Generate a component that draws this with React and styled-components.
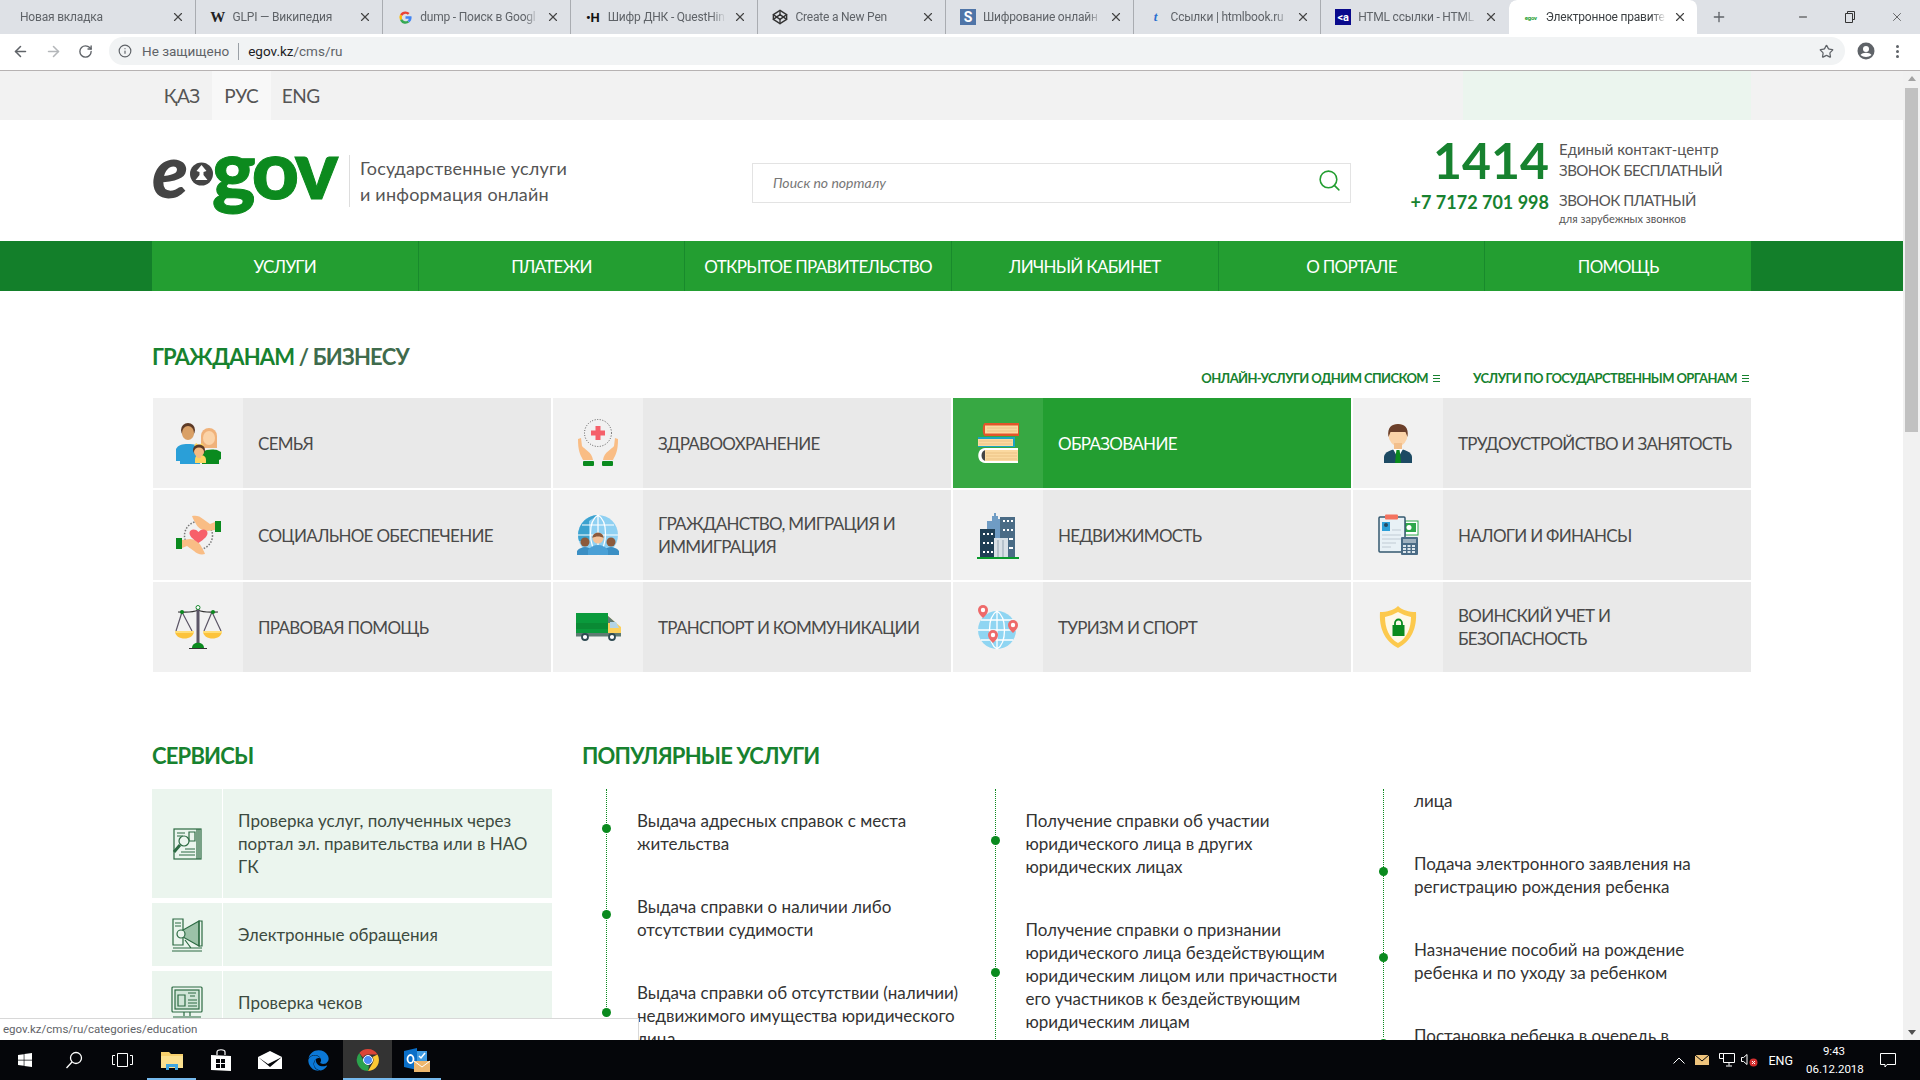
import React from "react";
import styled, { createGlobalStyle } from "styled-components";
import { ArrowLeft, ArrowRight, RotateCw, Info, Star, X, Plus, Minus, Search, Codepen } from "lucide-react";
import { FaWindows, FaEdge } from "react-icons/fa";

const SANS = `"Lato", "Roboto", "Liberation Sans", sans-serif`;
const UI = `"Roboto", "Liberation Sans", sans-serif`;
const GREEN = "#17822f";

const GlobalStyle = createGlobalStyle`
  html, body { margin: 0; padding: 0; background: #fff; overflow: hidden; }
  * { box-sizing: border-box; }
`;

const Screen = styled.div`
  width: 1920px;
  height: 1080px;
  display: flex;
  flex-direction: column;
  overflow: hidden;
  font-family: ${SANS};
`;

/* browser chrome */
const TabStrip = styled.div`
  height: 34px;
  background: #dee1e6;
  display: flex;
  padding-left: 8px;
  position: relative;
  font-family: ${UI};
`;
const Tab = styled.div`
  width: ${(p) => (p.$active ? "189px" : "187.6px")};
  height: 34px;
  display: flex;
  align-items: center;
  gap: 7px;
  padding: 0 10px 0 ${(p) => (p.$plain ? "12px" : "14px")};
  background: ${(p) => (p.$active ? "#fff" : "transparent")};
  border-radius: ${(p) => (p.$active ? "8px 8px 0 0" : "0")};
  border-right: 1px solid ${(p) => (p.$noSep ? "transparent" : "#a9acb1")};
  background-clip: padding-box;
  color: ${(p) => (p.$active ? "#3c4043" : "#5f6368")};
  font-size: 12px;
  letter-spacing: -0.2px;
  svg.close { color: #444; flex: none; }
`;
const TabTitle = styled.span`
  flex: 1;
  white-space: nowrap;
  overflow: hidden;
  -webkit-mask-image: linear-gradient(90deg, #000 88%, transparent);
  mask-image: linear-gradient(90deg, #000 88%, transparent);
`;
const Favicon = styled.span`
  width: 16px;
  height: 16px;
  flex: none;
  display: flex;
  align-items: center;
  justify-content: center;
  font-size: ${(p) => p.$size || 12}px;
  font-weight: 700;
  font-family: ${(p) => (p.$serif ? `"Liberation Serif", serif` : UI)};
  color: ${(p) => p.$color || "#222"};
  background: ${(p) => p.$bg || "transparent"};
`;
const NewTab = styled.div`
  width: 30px;
  display: flex;
  align-items: center;
  justify-content: center;
  color: #5f6368;
  margin-left: 6px;
`;
const WindowControls = styled.div`
  margin-left: auto;
  display: flex;
  align-items: center;
  color: #333;
`;
const WindowButton = styled.div`
  width: 47px;
  height: 30px;
  display: flex;
  align-items: center;
  justify-content: center;
`;
const Toolbar = styled.div`
  height: 37px;
  background: #fff;
  border-bottom: 1px solid #b7b3b3;
  display: flex;
  align-items: center;
  padding: 0 10px 2px 12px;
  color: #5f6368;
`;
const NavIcons = styled.div`
  display: flex;
  align-items: center;
  gap: 16px;
  width: 97px;
`;
const Omnibox = styled.div`
  width: 1736px;
  height: 28px;
  border-radius: 14px;
  background: #f1f3f4;
  display: flex;
  align-items: center;
  padding: 0 11px 0 9px;
  font: 13.5px ${UI};
  color: #5f6368;
`;
const Secure = styled.span`
  margin-left: 10px;
  padding-right: 9px;
  margin-right: 9px;
  border-right: 1px solid #9aa0a6;
  line-height: 17px;
`;
const Host = styled.span`color: #202124;`;
const OmniStar = styled(Star)`
  margin-left: auto;
`;
const ToolbarEnd = styled.div`
  margin-left: 12px;
  display: flex;
  align-items: center;
  gap: 21px;
`;
const Kebab = styled.span`
  display: flex;
  flex-direction: column;
  gap: 2px;
  i { width: 3px; height: 3px; border-radius: 50%; background: #5f6368; }
`;

/* page viewport */
const Viewport = styled.div`
  position: relative;
  height: 969px;
  display: flex;
  overflow: hidden;
  background: #fff;
`;
const Page = styled.div`
  width: 1903px;
  flex: none;
`;
const Scrollbar = styled.div`
  width: 17px;
  background: #f1f1f1;
  padding: 17px 2px 0;
  position: relative;
  i { display: block; height: 344px; background: #c1c1c1; }
  &::before, &::after {
    content: "";
    position: absolute;
    left: 5px;
    border-left: 4px solid transparent;
    border-right: 4px solid transparent;
  }
  &::before { top: 5px; border-bottom: 5px solid #a3a3a3; }
  &::after { bottom: 5px; border-top: 5px solid #505050; }
`;
const Container = styled.div`
  width: 1599px;
  margin: 0 auto;
`;
const StatusBubble = styled.div`
  position: absolute;
  left: 0;
  bottom: 0;
  width: 639px;
  height: 22px;
  background: #fff;
  border-top: 1px solid #d8d8d8;
  border-right: 1px solid #d8d8d8;
  padding-left: 3px;
  font: 11.5px/21px ${UI};
  color: #5f6368;
`;

/* lang bar */
const LangBar = styled.div`
  height: 49px;
  background: #f2f2f2;
`;
const LangRow = styled(Container)`
  height: 49px;
  display: flex;
`;
const LangItem = styled.a`
  width: 59.5px;
  display: flex;
  align-items: center;
  justify-content: center;
  font-size: 19px;
  letter-spacing: -0.5px;
  color: #555;
  background: ${(p) => (p.$active ? "#f8f8f8" : "transparent")};
`;
const LangPromo = styled.div`
  width: 288px;
  margin-left: auto;
  background: #ebf5ee;
`;

/* header */
const Header = styled(Container)`
  height: 121px;
  display: flex;
  align-items: center;
`;
const Logo = styled.div`
  width: 197px;
  height: 66px;
  margin-top: -20px;
  display: flex;
  align-items: flex-start;
  line-height: 1;
`;
const LogoE = styled.span`
  font: italic 900 74px/58px ${SANS};
  color: #444;
  width: 36px;
  margin-top: 3px;
`;
const LogoMark = styled.svg`
  margin: 24px 0 0 1px;
  flex: none;
`;
const LogoGov = styled.span`
  font: 900 82px/58px ${SANS};
  color: #0c8a1e;
  letter-spacing: -3px;
  margin-left: -2px;
  -webkit-text-stroke: 1px #0c8a1e;
`;
const Tagline = styled.div`
  width: 403px;
  height: 52px;
  border-left: 1px solid #ddd;
  padding-left: 10px;
  font-size: 18px;
  letter-spacing: 0.2px;
  line-height: 26px;
  color: #555;
`;
const SearchBox = styled.div`
  width: 599px;
  height: 40px;
  margin-top: 4px;
  border: 1px solid #e3e3e3;
  display: flex;
  align-items: center;
  justify-content: space-between;
  padding: 0 8px 0 20px;
  font-style: italic;
  font-size: 14px;
  color: #777;
  svg { color: #239e31; margin-bottom: 4px; }
`;
const Contacts = styled.div`
  flex: 1;
  margin-top: 3px;
  display: grid;
  grid-template-columns: 198px auto;
  column-gap: 10px;
  row-gap: 9px;
  align-items: center;
  color: #555;
`;
const BigPhone = styled.div`
  text-align: right;
  font: 700 50px/42px ${SANS};
  color: ${GREEN};
`;
const SmallPhone = styled.div`
  align-self: start;
  padding-top: 2px;
  text-align: right;
  font: 700 18px/20px ${SANS};
  color: ${GREEN};
`;
const PhoneNote = styled.div`
  font-size: 15px;
  line-height: 21px;
  white-space: nowrap;
  small { display: block; font-size: 11px; line-height: 15px; }
`;
const Caps = styled.span`
  letter-spacing: -0.5px;
`;

/* nav */
const NavBar = styled.nav`
  height: 50px;
  background: #137f2a;
`;
const NavRow = styled(Container)`
  height: 50px;
  display: flex;
`;
const NavItem = styled.a`
  flex: 1;
  background: #239e31;
  border-left: ${(p) => (p.$first ? "none" : "1px solid #188a2c")};
  display: flex;
  align-items: center;
  justify-content: center;
  font-size: 17px;
  letter-spacing: -0.7px;
  color: #fff;
`;

/* categories */
const Heading = styled.h2`
  margin: 0;
  font: 700 22px/28px ${SANS};
  letter-spacing: -0.8px;
  color: ${GREEN};
  span { color: #3f6b4c; }
`;
const TopHeading = styled(Heading)`
  margin-top: 52px;
`;
const LinkRow = styled.div`
  display: flex;
  justify-content: flex-end;
  gap: 33px;
  padding-right: 2px;
  height: 18px;
  margin: -2px 0 11px;
`;
const ListLink = styled.a`
  display: flex;
  align-items: center;
  gap: 5px;
  font: 700 13px/18px ${SANS};
  letter-spacing: -0.6px;
  color: ${GREEN};
`;
const ListGlyph = styled.i`
  width: 7px;
  height: 7px;
  border-top: 1px solid ${GREEN};
  border-bottom: 1px solid ${GREEN};
  position: relative;
  &::after {
    content: "";
    position: absolute;
    left: 0;
    right: 0;
    top: 2px;
    border-top: 1px solid ${GREEN};
  }
`;
const CategoryGrid = styled.div`
  display: grid;
  grid-template-columns: repeat(4, 398px);
  grid-auto-rows: 90px;
  gap: 2px;
  padding-left: 1px;
`;
const Category = styled.a`
  display: flex;
  background: ${(p) => (p.$active ? "#239e31" : "#e9e9e9")};
  color: ${(p) => (p.$active ? "#fff" : "#4a4a4a")};
`;
const CategoryIcon = styled.div`
  width: 90px;
  flex: none;
  display: flex;
  align-items: center;
  justify-content: center;
  background: ${(p) => (p.$active ? "#37a843" : "#f1f1f1")};
`;
const CategoryName = styled.div`
  flex: 1;
  align-self: center;
  padding: 0 13px 0 15px;
  font-size: 17px;
  letter-spacing: -0.7px;
  line-height: 23px;
`;

/* lower part */
const Lower = styled.div`
  display: flex;
  margin-top: 70px;
`;
const ServicesCol = styled.div`
  width: 430px;
  flex: none;
`;
const PopularCol = styled.div`
  flex: 1;
`;
const LowerHeading = styled(Heading)`
  margin-bottom: 19px;
`;
const ServiceList = styled.div`
  width: 400px;
  display: flex;
  flex-direction: column;
  gap: 5px;
`;
const Service = styled.a`
  display: flex;
  min-height: 63px;
  background: #ebf5ee;
  color: #3c4a40;
`;
const ServiceIcon = styled.div`
  width: 71px;
  flex: none;
  border-right: 1px solid #fff;
  display: flex;
  align-items: center;
  justify-content: center;
`;
const ServiceText = styled.div`
  align-self: center;
  padding: ${(p) => (p.$tall ? "20px 0 20px 15px" : "0 0 0 15px")};
  font-size: 17px;
  line-height: 23px;
`;
const PopularColumns = styled.div`
  display: flex;
  padding-left: 24px;
  margin-top: 2px;
`;
const PopularColumn = styled.div`
  width: 388.5px;
  flex: none;
  position: relative;
  height: ${(p) => p.$height || 260}px;
  border-left: 1px dotted #0a8a1e;
`;
const PopularItem = styled.div`
  position: relative;
  padding: ${(p) => (p.$tail ? "0 0 20px 30px" : "20px 0 20px 30px")};
  font-size: 17px;
  line-height: 23px;
  color: #333;
  &::before {
    content: "";
    display: ${(p) => (p.$tail ? "none" : "block")};
    position: absolute;
    left: -5px;
    top: calc(50% - 8px);
    width: 9px;
    height: 9px;
    border-radius: 50%;
    background: #0a8a1e;
  }
`;

/* taskbar */
const Taskbar = styled.div`
  height: 40px;
  flex: none;
  background: #05060a;
  display: flex;
  align-items: stretch;
  color: #fff;
  font-family: ${UI};
`;
const TaskButton = styled.div`
  width: 49px;
  display: flex;
  align-items: center;
  justify-content: center;
  background: ${(p) => (p.$current ? "#333" : "transparent")};
  box-shadow: ${(p) => (p.$open ? "inset 0 -2px 0 #76b9ed" : "none")};
`;
const Tray = styled.div`
  margin-left: auto;
  display: flex;
  align-items: center;
  font-size: 12.5px;
  padding-right: 24px;
`;
const TrayItem = styled.div`
  display: flex;
  align-items: center;
  justify-content: center;
  margin-right: ${(p) => p.$gap || 10}px;
`;
const Clock = styled.div`
  width: 56px;
  text-align: center;
  font-size: 11.5px;
  line-height: 18px;
  margin: 0 18px 0 12px;
`;

const Ic = ({ children }) => (
  <svg width="48" height="48" viewBox="0 0 48 48">{children}</svg>
);

const FamilyIcon = () => (
  <Ic>
    <circle cx="35" cy="17" r="8" fill="#f0b27a" />
    <rect x="27" y="17" width="16" height="12" fill="#f0b27a" />
    <ellipse cx="35" cy="19" rx="6" ry="7" fill="#fbd3a8" />
    <path d="M28 33c4-3 12-3 15-2l4 2v7l-2 1v4H28z" fill="#0a8a1e" />
    <circle cx="14" cy="11" r="7" fill="#5d3a26" />
    <ellipse cx="14" cy="14" rx="6" ry="7" fill="#d9a066" />
    <path d="M2 30c2-4 6-5 12-5s10 1 12 5v15H6v-3H2z" fill="#2a9fd8" />
    <path d="M21 44v-3c0-4 2-5 5-5s6 1 6 5v3z" fill="#fcd462" />
    <path d="M20 27l2-3 3 2 3-2 2 3z" fill="#fcd462" />
    <ellipse cx="25" cy="31" rx="6" ry="5.5" fill="#5d3a26" />
    <ellipse cx="25" cy="33" rx="5" ry="4.5" fill="#f4bb84" />
    <rect x="23" y="36" width="4" height="3" fill="#f4bb84" />
  </Ic>
);
const HealthIcon = () => (
  <Ic>
    <circle cx="24" cy="14" r="13.5" fill="none" stroke="#555" strokeWidth="1" strokeDasharray="1 1.6" />
    <path d="M21.5 7h5v4.5H31v5h-4.500V21h-5v-4.500H17v-5h4.500z" fill="#f5606a" />
    <path d="M4 20l3-1 1 8c2 3 10 6 11 14H9C6 35 4 32 4 20z" fill="#f9bd85" />
    <path d="M44 20l-3-1-1 8c-2 3-10 6-11 14h10c3-6 5-9 5-21z" fill="#f9bd85" />
    <rect x="9" y="42" width="11" height="5" rx="1" fill="#0a8a1e" />
    <rect x="28" y="42" width="11" height="5" rx="1" fill="#0a8a1e" />
  </Ic>
);
const EducationIcon = () => (
  <Ic>
    <path d="M45 4H11C8 4 8 17 11 17h34" fill="#e2562a" />
    <rect x="11" y="6.500" width="33" height="8" fill="#fbd9a0" />
    <path d="M13 9h30M13 12h30" stroke="#e9bd7d" strokeWidth=".8" />
    <path d="M4 18h37v10H4z" fill="#19a5c4" />
    <rect x="4" y="20" width="35" height="7" fill="#fbd9a0" />
    <path d="M5 22h33M5 25h33" stroke="#e9bd7d" strokeWidth=".8" />
    <path d="M44 29H11C2 29 2 44 11 44h33z" fill="#fff" />
    <path d="M12 31C6 31 6 42 12 42z" fill="#444" />
    <rect x="11" y="31" width="33" height="11" fill="#fbd9a0" />
    <path d="M12 34h31M12 37h31M12 40h31" stroke="#e9bd7d" strokeWidth=".8" />
  </Ic>
);
const JobIcon = () => (
  <Ic>
    <path d="M10 44v-6c0-5 8-8 14-8s14 3 14 8v6z" fill="#1d4a63" />
    <path d="M19 30l5 9 5-9-5-2z" fill="#fff" />
    <path d="M22.500 31h3l.5 3 1 10h-6l1-10z" fill="#0a8a1e" />
    <ellipse cx="24" cy="16" rx="9.500" ry="11" fill="#fbd3a8" />
    <rect x="20" y="24" width="8" height="6" fill="#f2bf8c" />
    <path d="M14.500 18C13 8 18 5 24 5s11 3 9.500 13l-2-5H16.500z" fill="#6b3f2a" />
  </Ic>
);
const SocialIcon = () => (
  <Ic>
    <circle cx="24.500" cy="24.500" r="14" fill="none" stroke="#777" strokeWidth="1.500" strokeDasharray="1.500 1.500" />
    <path d="M18 5c4-1 8 0 11 3l7 5 5-2v8l-8 1c-4 0-9-3-11-7-1-2-3-5-4-8z" fill="#f9bd85" />
    <rect x="41" y="10" width="6" height="11" fill="#0a8a1e" />
    <path d="M31 43c-4 1-8 0-11-3l-7-5-5 2v-8l8-1c4 0 9 3 11 7 1 2 3 5 4 8z" fill="#f9bd85" />
    <rect x="2" y="27" width="6" height="11" fill="#0a8a1e" />
    <path d="M24.500 32c-6-4-9-7-9-10 0-4 6-5 9-1 3-4 9-3 9 1 0 3-3 6-9 10z" fill="#f7606a" />
  </Ic>
);
const MigrationIcon = () => (
  <Ic>
    <circle cx="24" cy="24" r="20" fill="#8ed0f2" />
    <path d="M24 4A20 20 0 0 0 5 30h10V10z" fill="#3ca2cf" />
    <path d="M24 4v40M4 24h40M8 14h32M24 4c-10 6-10 30 0 40M24 4c10 6 10 30 0 40" stroke="#fff" strokeWidth="1.200" fill="none" />
    <circle cx="11" cy="31" r="4.500" fill="#8c5a3c" />
    <circle cx="37" cy="31" r="4.500" fill="#8c5a3c" />
    <path d="M3 44v-4c2-3 6-4 8-4s6 1 8 4v4zM29 44v-4c2-3 6-4 8-4s6 1 8 4v4z" fill="#3b8fc4" />
    <circle cx="24" cy="27" r="5.500" fill="#f3c39a" />
    <path d="M18.500 27c0-7 11-7 11 0-3-2-8-2-11 0z" fill="#8c5a3c" />
    <path d="M14 44v-5c2-3 6-5 10-5s8 2 10 5v5z" fill="#4aa0d6" />
  </Ic>
);
const EstateIcon = () => (
  <Ic>
    <path d="M18 5h2V2h2v3h2v3h2v36H13V10h5z" fill="#6f9cc4" />
    <rect x="26" y="6" width="15" height="40" fill="#4a6b85" />
    <path d="M29 10h2M33 10h2M37 10h2M29 19h2M33 19h2M37 19h2M35 28h4M35 37h4" stroke="#fff" strokeWidth="2" />
    <rect x="6" y="18" width="15" height="28" fill="#1f3f55" />
    <path d="M9 23h2M13 23h2M17 23h2M9 32h2M13 32h2M17 32h2M9 41h2M13 41h2M17 41h2" stroke="#fff" strokeWidth="2" />
    <rect x="20" y="27" width="14" height="19" fill="#d8e0e6" />
    <path d="M24 29v17M29 29v17" stroke="#a9b7c2" strokeWidth="1.500" />
    <rect x="3" y="46" width="42" height="2" fill="#0a9a2e" />
  </Ic>
);
const TaxIcon = () => (
  <Ic>
    <rect x="31" y="10" width="13" height="14" fill="#fff" stroke="#2ea84a" />
    <rect x="31" y="12" width="11" height="9" fill="#2ea84a" />
    <circle cx="35" cy="16.500" r="2.500" fill="#fff" />
    <rect x="5" y="6" width="26" height="35" rx="1" fill="#e8f1f6" stroke="#34586f" strokeWidth="1.500" />
    <rect x="11" y="3.500" width="13" height="5" rx="1" fill="#f4735f" />
    <rect x="8" y="11" width="8" height="9" fill="#2a9fd8" />
    <circle cx="12" cy="14" r="2" fill="#254a63" />
    <path d="M18 19h9M8 24h19M8 28h19M8 32h14M8 36h9" stroke="#c0ccd4" strokeWidth="1.200" />
    <rect x="27" y="26" width="17" height="18" rx="1" fill="#4a6b85" />
    <rect x="29" y="28" width="13" height="4" fill="#9fb1bf" />
    <path d="M29 35h3M33.500 35h3M38 35h3M29 38h3M33.500 38h3M38 38h3M29 41h3M33.500 41h3M38 41h3" stroke="#dde6ec" strokeWidth="1.800" />
  </Ic>
);
const LawIcon = () => (
  <Ic>
    <path d="M4 9c8 0 14 1 20-2 6 3 12 2 20 2" stroke="#333" strokeWidth="1.200" fill="none" />
    <rect x="22.500" y="5" width="3" height="38" fill="#5b5566" />
    <circle cx="24" cy="4.500" r="2" fill="#fff" stroke="#1a8a30" />
    <path d="M8 9L2 28M8 9l10 19M38 9l-8 19M38 9l9 19" stroke="#5b5566" strokeWidth="1.200" />
    <circle cx="8" cy="9" r="2" fill="#0a8a1e" />
    <circle cx="39" cy="9" r="2" fill="#0a8a1e" />
    <path d="M1 28h19c0 10-19 10-19 0zM29 28h19c0 10-19 10-19 0z" fill="#fcc33b" />
    <path d="M1 28h19v2H1zM29 28h19v2H29z" fill="#ffdd77" />
    <path d="M18 45c0-7 12-7 12 0z" fill="#0a8a1e" />
    <path d="M15 45.500h18" stroke="#333" />
  </Ic>
);
const TruckIcon = () => (
  <Ic>
    <rect x="2" y="10" width="32" height="20" fill="#0a9a3c" />
    <rect x="2" y="20" width="32" height="6" fill="#0a8a34" />
    <path d="M34 13l8 7 5 4v6H34z" fill="#fcd05a" />
    <path d="M34 13l8 7-8 0z" fill="#5e7a72" />
    <path d="M36 19h6l3 6h-9z" fill="#b3d4e6" />
    <rect x="2" y="30" width="45" height="3.500" fill="#5e7a72" />
    <circle cx="11" cy="34" r="3" fill="#fff" stroke="#2f4a52" strokeWidth="1.800" />
    <circle cx="38" cy="34" r="3" fill="#fff" stroke="#2f4a52" strokeWidth="1.800" />
  </Ic>
);
const Pin = ({ x, y }) => (
  <g>
    <path d={`M${x} ${y + 7}c-3-3-5-5-5-8a5 5 0 0 1 10 0c0 3-2 5-5 8z`} fill="#ee6a6a" />
    <circle cx={x} cy={y - 1} r="2.200" fill="#fff" />
  </g>
);
const TourismIcon = () => (
  <Ic>
    <circle cx="23" cy="27" r="19" fill="#8fd5f2" />
    <path d="M23 8v38M4 27h38M7 17h32M7 37h32M23 8c-10 6-10 32 0 38M23 8c10 6 10 32 0 38" stroke="#fff" strokeWidth="1.300" fill="none" />
    <Pin x={9} y={8} />
    <Pin x={39} y={23} />
    <Pin x={19} y={33} />
  </Ic>
);
const ShieldIcon = () => (
  <Ic>
    <path d="M24 3c4 4 11 6 18 6 1 15-4 29-18 36C10 38 5 24 6 9c7 0 14-2 18-6z" fill="#fcc94d" />
    <path d="M24 9c4 2 8 4 13 5 0 11-4 21-13 26-9-5-13-15-13-26 5-1 9-3 13-5z" fill="#fdf8e8" />
    <rect x="18.500" y="22" width="12" height="11" fill="#0a8a1e" />
    <path d="M21 22v-2a3.500 3.500 0 0 1 7 0v2" fill="none" stroke="#0a8a1e" strokeWidth="1.800" />
  </Ic>
);

const CATEGORIES = [
  { name: "СЕМЬЯ", icon: FamilyIcon },
  { name: "ЗДРАВООХРАНЕНИЕ", icon: HealthIcon },
  { name: "ОБРАЗОВАНИЕ", icon: EducationIcon, active: true },
  { name: "ТРУДОУСТРОЙСТВО И ЗАНЯТОСТЬ", icon: JobIcon },
  { name: "СОЦИАЛЬНОЕ ОБЕСПЕЧЕНИЕ", icon: SocialIcon },
  { name: "ГРАЖДАНСТВО, МИГРАЦИЯ И ИММИГРАЦИЯ", icon: MigrationIcon },
  { name: "НЕДВИЖИМОСТЬ", icon: EstateIcon },
  { name: "НАЛОГИ И ФИНАНСЫ", icon: TaxIcon },
  { name: "ПРАВОВАЯ ПОМОЩЬ", icon: LawIcon },
  { name: "ТРАНСПОРТ И КОММУНИКАЦИИ", icon: TruckIcon },
  { name: "ТУРИЗМ И СПОРТ", icon: TourismIcon },
  { name: "ВОИНСКИЙ УЧЕТ И БЕЗОПАСНОСТЬ", icon: ShieldIcon },
];

const NAV = ["УСЛУГИ", "ПЛАТЕЖИ", "ОТКРЫТОЕ ПРАВИТЕЛЬСТВО", "ЛИЧНЫЙ КАБИНЕТ", "О ПОРТАЛЕ", "ПОМОЩЬ"];

const ServiceGlyph = ({ kind }) => (
  <svg width="34" height="36" viewBox="0 0 34 36" fill="none" stroke="#2c6a42" strokeWidth="1.200">
    {kind === "check" && (
      <g>
        <rect x="4" y="3" width="27" height="30" />
        <path d="M27 3v30M29 3v30M7 7h8M7 10h6M19 6h6v9h-6zM15 23h10M11 26h14M9 29h16" />
        <circle cx="14" cy="15" r="5" fill="#ebf5ee" />
        <path d="M10 19l-6 7" strokeWidth="3" />
      </g>
    )}
    {kind === "appeal" && (
      <g>
        <path d="M3 2h10v26H3zM5 6h6M5 9h6" />
        <path d="M29 4v25L13 20v-7z" fill="#9cc2a8" />
        <path d="M29 4h3v25h-3z" />
        <circle cx="11" cy="17" r="4" fill="#ebf5ee" />
        <path d="M15 23l6 8M3 31h29M2 34h30" />
      </g>
    )}
    {kind === "receipt" && (
      <g>
        <rect x="2" y="2" width="30" height="25" rx="1" />
        <rect x="5" y="5" width="24" height="19" fill="#cfe5d6" />
        <path d="M8 10h7v11H8zM18 8h8M20 11h5M18 15h9M18 18h9M18 21h9" />
        <path d="M14 27v4M20 27v4M3 32h28M2 35h30" />
      </g>
    )}
  </svg>
);

const ChromeLogo = () => (
  <svg width="24" height="24" viewBox="0 0 24 24">
    <path d="M12 1a11 11 0 0 1 9.500 5.500H12a5.500 5.500 0 0 0-5 3L3.300 5A11 11 0 0 1 12 1z" fill="#db4437" />
    <path d="M21.500 6.500A11 11 0 0 1 12 23l4.800-8.300A5.500 5.500 0 0 0 16.500 9z" fill="#fcc934" />
    <path d="M12 23A11 11 0 0 1 3.300 5L8 13.500a5.500 5.500 0 0 0 5 4z" fill="#2ba24c" />
    <circle cx="12" cy="12" r="4.500" fill="#4b8bf5" stroke="#fff" strokeWidth="1" />
  </svg>
);

const Close = () => <X className="close" size={14} />;

export default function App() {
  return (
    <Screen>
      <GlobalStyle />
      <TabStrip>
        <Tab $plain><TabTitle>Новая вкладка</TabTitle><Close /></Tab>
        <Tab><Favicon $serif $size={15}>W</Favicon><TabTitle>GLPI — Википедия</TabTitle><Close /></Tab>
        <Tab>
          <Favicon>
            <svg width="15" height="15" viewBox="0 0 16 16">
              <path d="M8 1.500a6.500 6.500 0 0 1 4.400 1.700l-1.900 1.900A3.800 3.800 0 0 0 4.400 6.500L2.200 4.800A6.500 6.500 0 0 1 8 1.500z" fill="#ea4335" />
              <path d="M2.200 4.800l2.200 1.700a3.800 3.800 0 0 0 0 3L2.200 11.200a6.500 6.500 0 0 1 0-6.400z" fill="#fbbc05" />
              <path d="M4.400 9.500a3.800 3.800 0 0 0 5.700 1.900l2.100 1.700A6.500 6.500 0 0 1 2.200 11.200z" fill="#34a853" />
              <path d="M14.500 8c0 2-.8 3.800-2.300 5.100l-2.100-1.700c.7-.5 1.100-1.200 1.300-2.100H8V6.700h6.300c.1.400.2.800.2 1.300z" fill="#4285f4" />
            </svg>
          </Favicon>
          <TabTitle>dump - Поиск в Googl</TabTitle><Close />
        </Tab>
        <Tab><Favicon $size={13} $color="#111">•H</Favicon><TabTitle>Шифр ДНК - QuestHin</TabTitle><Close /></Tab>
        <Tab><Favicon><Codepen size={16} color="#333" /></Favicon><TabTitle>Create a New Pen</TabTitle><Close /></Tab>
        <Tab><Favicon $bg="#4f75a8" $color="#fff" $size={14}>S</Favicon><TabTitle>Шифрование онлайн</TabTitle><Close /></Tab>
        <Tab><Favicon $serif $color="#2a6fd0" $size={13}><i>t</i></Favicon><TabTitle>Ссылки | htmlbook.ru</TabTitle><Close /></Tab>
        <Tab $noSep><Favicon $bg="#0a0a8c" $color="#fff" $size={11}>&lt;a</Favicon><TabTitle>HTML ссылки - HTML</TabTitle><Close /></Tab>
        <Tab $active $noSep>
          <Favicon $color="#239e31" $size={6}>egov</Favicon>
          <TabTitle>Электронное правите</TabTitle><Close />
        </Tab>
        <NewTab><Plus size={16} /></NewTab>
        <WindowControls>
          <WindowButton><Minus size={12} /></WindowButton>
          <WindowButton>
            <svg width="10" height="12" viewBox="0 0 10 12" fill="none" stroke="#333"><path d="M2.500 2.500V.5h7v8h-2M.5 2.500h7v9h-7z" /></svg>
          </WindowButton>
          <WindowButton><X size={14} strokeWidth={1.200} /></WindowButton>
        </WindowControls>
      </TabStrip>
      <Toolbar>
        <NavIcons>
          <ArrowLeft size={17} strokeWidth={2.200} />
          <ArrowRight size={17} strokeWidth={2.200} color="#b4b7ba" />
          <RotateCw size={15} strokeWidth={2.200} />
        </NavIcons>
        <Omnibox>
          <Info size={14} />
          <Secure>Не защищено</Secure>
          <Host>egov.kz</Host>/cms/ru
          <OmniStar size={15} />
        </Omnibox>
        <ToolbarEnd>
          <svg width="18" height="18" viewBox="0 0 18 18">
            <circle cx="9" cy="9" r="8.500" fill="#5f6368" />
            <circle cx="9" cy="7" r="3" fill="#fff" />
            <path d="M3.500 13c2-3 9-3 11 0-3 2.500-8 2.500-11 0z" fill="#fff" />
          </svg>
          <Kebab><i /><i /><i /></Kebab>
        </ToolbarEnd>
      </Toolbar>

      <Viewport>
        <Page>
          <LangBar>
            <LangRow>
              <LangItem>ҚАЗ</LangItem>
              <LangItem $active>РУС</LangItem>
              <LangItem>ENG</LangItem>
              <LangPromo />
            </LangRow>
          </LangBar>
          <Header>
            <Logo>
              <LogoE>e</LogoE>
              <LogoMark width="25" height="24" viewBox="0 0 25 24">
                <circle cx="12.500" cy="12" r="11.500" fill="#444" />
                <path d="M12.500 3l5 6-3 1v3l4 5h-12l4-5v-3l-3-1z" fill="#fff" />
              </LogoMark>
              <LogoGov>gov</LogoGov>
            </Logo>
            <Tagline>Государственные услуги<br />и информация онлайн</Tagline>
            <SearchBox>
              Поиск по порталу
              <Search size={25} strokeWidth={1.500} />
            </SearchBox>
            <Contacts>
              <BigPhone>1414</BigPhone>
              <PhoneNote>Единый контакт-центр<br /><Caps>ЗВОНОК БЕСПЛАТНЫЙ</Caps></PhoneNote>
              <SmallPhone>+7 7172 701 998</SmallPhone>
              <PhoneNote><Caps>ЗВОНОК ПЛАТНЫЙ</Caps><small>для зарубежных звонков</small></PhoneNote>
            </Contacts>
          </Header>
          <NavBar>
            <NavRow>
              {NAV.map((item, i) => <NavItem key={item} $first={i === 0}>{item}</NavItem>)}
            </NavRow>
          </NavBar>
          <Container>
            <TopHeading>ГРАЖДАНАМ <span>/ БИЗНЕСУ</span></TopHeading>
            <LinkRow>
              <ListLink>ОНЛАЙН-УСЛУГИ ОДНИМ СПИСКОМ <ListGlyph /></ListLink>
              <ListLink>УСЛУГИ ПО ГОСУДАРСТВЕННЫМ ОРГАНАМ <ListGlyph /></ListLink>
            </LinkRow>
            <CategoryGrid>
              {CATEGORIES.map(({ name, icon: Icon, active }) => (
                <Category key={name} $active={active}>
                  <CategoryIcon $active={active}><Icon /></CategoryIcon>
                  <CategoryName>{name}</CategoryName>
                </Category>
              ))}
            </CategoryGrid>
            <Lower>
              <ServicesCol>
                <LowerHeading>СЕРВИСЫ</LowerHeading>
                <ServiceList>
                  <Service>
                    <ServiceIcon><ServiceGlyph kind="check" /></ServiceIcon>
                    <ServiceText $tall>
                      Проверка услуг, полученных через<br />портал эл. правительства или в НАО<br />ГК
                    </ServiceText>
                  </Service>
                  <Service>
                    <ServiceIcon><ServiceGlyph kind="appeal" /></ServiceIcon>
                    <ServiceText>Электронные обращения</ServiceText>
                  </Service>
                  <Service>
                    <ServiceIcon><ServiceGlyph kind="receipt" /></ServiceIcon>
                    <ServiceText>Проверка чеков</ServiceText>
                  </Service>
                </ServiceList>
              </ServicesCol>
              <PopularCol>
                <LowerHeading>ПОПУЛЯРНЫЕ УСЛУГИ</LowerHeading>
                <PopularColumns>
                  <PopularColumn>
                    <PopularItem>Выдача адресных справок с места<br />жительства</PopularItem>
                    <PopularItem>Выдача справки о наличии либо<br />отсутствии судимости</PopularItem>
                    <PopularItem>Выдача справки об отсутствии (наличии)<br />недвижимого имущества юридического<br />лица</PopularItem>
                  </PopularColumn>
                  <PopularColumn>
                    <PopularItem>Получение справки об участии<br />юридического лица в других<br />юридических лицах</PopularItem>
                    <PopularItem>Получение справки о признании<br />юридического лица бездействующим<br />юридическим лицом или причастности<br />его участников к бездействующим<br />юридическим лицам</PopularItem>
                  </PopularColumn>
                  <PopularColumn $height={248}>
                    <PopularItem $tail>лица</PopularItem>
                    <PopularItem>Подача электронного заявления на<br />регистрацию рождения ребенка</PopularItem>
                    <PopularItem>Назначение пособий на рождение<br />ребенка и по уходу за ребенком</PopularItem>
                    <PopularItem>Постановка ребенка в очередь в<br />дошкольные организации</PopularItem>
                  </PopularColumn>
                </PopularColumns>
              </PopularCol>
            </Lower>
          </Container>
        </Page>
        <Scrollbar><i /></Scrollbar>
        <StatusBubble>egov.kz/cms/ru/categories/education</StatusBubble>
      </Viewport>

      <Taskbar>
        <TaskButton><FaWindows size={16} /></TaskButton>
        <TaskButton>
          <svg width="18" height="18" viewBox="0 0 18 18" fill="none" stroke="#fff" strokeWidth="1.300"><circle cx="11" cy="7" r="5.500" /><path d="M7 11l-5.500 6" /></svg>
        </TaskButton>
        <TaskButton>
          <svg width="21" height="14" viewBox="0 0 21 14" fill="none" stroke="#fff"><path d="M5.500.5h10v13h-10zM3 2.500H.5v9H3M18 2.500h2.500v9H18" /></svg>
        </TaskButton>
        <TaskButton $open>
          <svg width="22" height="20" viewBox="0 0 22 20">
            <path d="M0 2h8l2 2h12v14H0z" fill="#f6cf6c" />
            <path d="M0 6h22v12H0z" fill="#fbe08f" />
            <path d="M5 14h12v6h-3v-3H8v3H5z" fill="#3fa6e0" />
          </svg>
        </TaskButton>
        <TaskButton>
          <svg width="22" height="23" viewBox="0 0 22 23">
            <path d="M1 6l20 1v15L1 21z" fill="#fff" />
            <path d="M7 6V3c0-3 8-3 8 0v3" fill="none" stroke="#fff" strokeWidth="1.200" />
            <path d="M6 10h4v4H6zM11 10h4v4h-4zM6 15h4v4H6zM11 15h4v4h-4z" fill="#05060a" />
          </svg>
        </TaskButton>
        <TaskButton>
          <svg width="24" height="18" viewBox="0 0 24 18">
            <path d="M0 6l12-6 12 6v12H0z" fill="#fff" />
            <path d="M0 6l10 7 14-7-12 10z" fill="#05060a" />
          </svg>
        </TaskButton>
        <TaskButton><FaEdge size={21} color="#0b78d7" /></TaskButton>
        <TaskButton $current $open><ChromeLogo /></TaskButton>
        <TaskButton $open>
          <svg width="26" height="24" viewBox="0 0 26 24">
            <path d="M0 3l13-3v22L0 19z" fill="#0b6fc8" />
            <rect x="13" y="3" width="10" height="12" fill="#3f9ae0" />
            <path d="M15 8l2 2 4-5" fill="none" stroke="#fff" strokeWidth="1.500" />
            <ellipse cx="6.500" cy="11" rx="3" ry="4" fill="none" stroke="#fff" strokeWidth="1.800" />
            <rect x="10" y="13" width="16" height="11" fill="#eeb76e" />
            <path d="M10 13l8 6 8-6" fill="none" stroke="#fff" />
          </svg>
        </TaskButton>
        <Tray>
          <TrayItem $gap={10}>
            <svg width="12" height="7" viewBox="0 0 12 7" fill="none" stroke="#fff"><path d="M.5 6.500L6 1l5.500 5.500" /></svg>
          </TrayItem>
          <TrayItem $gap={10}>
            <svg width="14" height="10" viewBox="0 0 14 10"><path d="M0 0h14v10H0z" fill="#eec37c" /><path d="M0 0l7 6 7-6" fill="none" stroke="#05060a" /></svg>
          </TrayItem>
          <TrayItem $gap={6}>
            <svg width="16" height="14" viewBox="0 0 16 14" fill="none" stroke="#fff"><path d="M4.500.5h11v9h-11zM.5.500h4v5h-4zM10 9.500v3M7 13h6" /></svg>
          </TrayItem>
          <TrayItem $gap={10}>
            <svg width="17" height="14" viewBox="0 0 17 14">
              <path d="M.5 4.500h2L6 1.500v10l-3.500-3h-2z" fill="none" stroke="#fff" />
              <circle cx="12.500" cy="9.500" r="4" fill="#d32f2f" />
              <path d="M11 8l3 3M14 8l-3 3" stroke="#fff" />
            </svg>
          </TrayItem>
          <TrayItem $gap={1}>ENG</TrayItem>
          <Clock>9:43<br />06.12.2018</Clock>
          <svg width="16" height="15" viewBox="0 0 16 15" fill="none" stroke="#fff"><path d="M.5.500h15v11H7l-2 2.500v-2.500H.5z" /></svg>
        </Tray>
      </Taskbar>
    </Screen>
  );
}
